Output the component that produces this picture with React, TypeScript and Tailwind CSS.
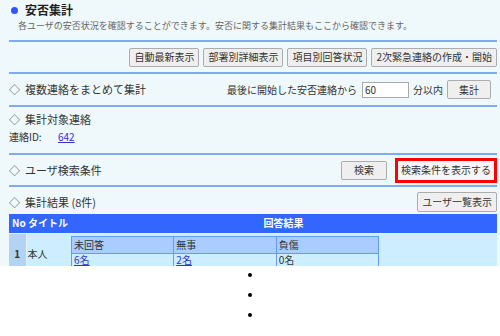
import React from 'react';

const btn =
  'h-[19px] px-[4px] border border-[#acacac] bg-[#efefef] rounded-[2px] text-[10px] leading-none text-[#333] whitespace-nowrap';

function Sep() {
  return <div className="h-[2px] bg-[#7ea9f3]" />;
}

function SectionTitle({ children }: { children: React.ReactNode }) {
  return (
    <div className="flex items-center text-[11px] leading-none text-[#333] whitespace-nowrap">
      <span className="text-[11px] w-[13px] text-[#444]">◇</span>
      <span className="ml-[3px]">{children}</span>
    </div>
  );
}

export default function App() {
  const results = [
    { label: '未回答', value: '6名', link: true },
    { label: '無事', value: '2名', link: true },
    { label: '負傷', value: '0名', link: false },
  ];

  return (
    <div className="w-[500px] h-[336px] bg-white font-['Noto_Sans_CJK_JP','Noto_Sans',sans-serif] text-[#333]">
      <div className="h-[266px] overflow-hidden bg-[#eff8fa] pl-[9px] pr-[3px]">
        {/* Header */}
        <div className="h-[40px] pt-[3px]">
          <div className="flex items-center h-[14px] pl-[2px]">
            <span className="w-[7px] h-[7px] rounded-full bg-[#3355ff]" />
            <h1 className="ml-[7px] text-[12px] font-bold leading-none text-[#222]">安否集計</h1>
          </div>
          <p className="h-[14px] mt-[1px] flex items-center pl-[9px] text-[9px] leading-none text-[#666] whitespace-nowrap">
            各ユーザの安否状況を確認することができます。安否に関する集計結果もここから確認できます。
          </p>
        </div>
        <Sep />

        {/* Action buttons */}
        <div className="h-[30px] flex items-center justify-end gap-[4px]">
          <button className={btn}>自動最新表示</button>
          <button className={btn}>部署別詳細表示</button>
          <button className={btn}>項目別回答状況</button>
          <button className={btn}>2次緊急連絡の作成・開始</button>
        </div>
        <Sep />

        {/* Multiple contacts */}
        <div className="h-[31px] flex items-center justify-between">
          <SectionTitle>複数連絡をまとめて集計</SectionTitle>
          <div className="flex items-center text-[10px] leading-none whitespace-nowrap mr-[6px]">
            <span>最後に開始した安否連絡から</span>
            <input
              readOnly
              value="60"
              className="ml-[5px] w-[47px] h-[16px] border border-[#a9a9a9] bg-white pl-[2px] text-[10px] leading-none text-[#333]"
            />
            <span className="ml-[4px]">分以内</span>
            <button className={`${btn} ml-[4px] w-[44px] h-[17px]`}>集計</button>
          </div>
        </div>
        <Sep />

        {/* Target contact */}
        <div className="h-[46px] pt-[7px]">
          <SectionTitle>集計対象連絡</SectionTitle>
          <div className="mt-[7px] flex items-center text-[10px] leading-none">
            <span className="w-[49px]">連絡ID:</span>
            <a href="#" className="text-[#3333cc] underline">642</a>
          </div>
        </div>
        <Sep />

        {/* User search */}
        <div className="h-[30px] flex items-center justify-between">
          <SectionTitle>ユーザ検索条件</SectionTitle>
          <div className="flex items-center">
            <button className={`${btn} h-[17px] w-[46px]`}>検索</button>
            <button className="ml-[8px] h-[25px] px-[3px] border-[3px] border-[#ff0000] bg-[#f6f6f6] text-[10px] leading-none text-[#333] whitespace-nowrap">
              検索条件を表示する
            </button>
          </div>
        </div>
        <Sep />

        {/* Results */}
        <div className="h-[27px] pt-[3px] flex items-center justify-between">
          <SectionTitle>集計結果 (8件)</SectionTitle>
          <button className={`${btn} h-[20px]`}>ユーザ一覧表示</button>
        </div>

        <table className="w-full border-collapse text-[10px] leading-none">
          <thead>
            <tr className="h-[19px] bg-[#3366ff] text-white font-bold">
              <th className="w-[17px] pl-[3px] text-left font-bold">No</th>
              <th className="w-[44px] pl-[2px] text-left font-bold">タイトル</th>
              <th className="text-center font-bold">回答結果</th>
            </tr>
          </thead>
          <tbody>
            <tr className="bg-[#cceeff]">
              <td className="bg-[#b3d3f3] border-t border-r border-[#e4f3fb] text-center font-bold align-middle">1</td>
              <td className="border-t border-[#e4f3fb] pl-[1px] align-middle">本人</td>
              <td className="border-t border-[#e4f3fb] pt-[2px] pb-[3px] pl-[1px]">
                <table className="w-[308px] border-collapse">
                  <tbody>
                    <tr className="h-[17px] bg-[#aaccff]">
                      {results.map((r) => (
                        <td key={r.label} className="w-1/3 border border-[#6699ff] pl-[2px]">
                          {r.label}
                        </td>
                      ))}
                    </tr>
                    <tr className="h-[17px]">
                      {results.map((r) => (
                        <td key={r.label} className="border border-[#6699ff] pl-[2px] pt-[1px] align-top">
                          {r.link ? (
                            <a href="#" className="text-[#3333cc] underline">{r.value}</a>
                          ) : (
                            r.value
                          )}
                        </td>
                      ))}
                    </tr>
                  </tbody>
                </table>
              </td>
            </tr>
          </tbody>
        </table>
      </div>

      {/* Vertical ellipsis */}
      <div className="flex flex-col items-center pt-[7px] gap-[16px]">
        <span className="w-[4px] h-[4px] rounded-full bg-black" />
        <span className="w-[4px] h-[4px] rounded-full bg-black" />
        <span className="w-[4px] h-[4px] rounded-full bg-black" />
      </div>
    </div>
  );
}
